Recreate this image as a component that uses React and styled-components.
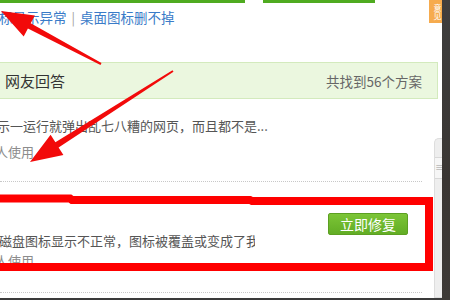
import React from 'react';
import styled, { createGlobalStyle } from 'styled-components';

const GlobalStyle = createGlobalStyle`
    html, body {
        margin: 0;
        padding: 0;
        background: #ffffff;
    }
    body {
        font-family: 'Noto Sans CJK SC', 'Noto Sans', 'Liberation Sans', sans-serif;
    }
`;

const Page = styled.div`
    display: flex;
    width: 450px;
    height: 300px;
    overflow: hidden;
    background: #3b3b3b;
`;

const Main = styled.div`
    position: relative;
    width: 442px;
    height: 298px;
    background: #ffffff;
    overflow: hidden;
`;

const DarkStrip = styled.div`
    flex: 1;
    background: linear-gradient(180deg, #3e3e3e 0%, #3a3633 60%, #3d3a37 100%);
`;

const TopBars = styled.div`
    display: flex;
    gap: 18px;
`;

const GreenBar = styled.div`
    width: ${(p) => p.$w}px;
    height: 3px;
    background: #4fab20;
`;

const LinkRow = styled.div`
    display: flex;
    align-items: center;
    margin: 4px 0 0 -1px;
    height: 20px;
    font-size: 13.5px;
    white-space: nowrap;
`;

const TextLink = styled.a`
    color: #3a7bc8;
    text-decoration: none;
`;

const Sep = styled.span`
    margin: 0 5px;
    color: #a0a0a0;
    font-size: 13px;
`;

const AnswerHead = styled.div`
    display: flex;
    align-items: center;
    justify-content: space-between;
    box-sizing: border-box;
    height: 37px;
    margin: 35px 4px 0 -1px;
    padding: 0 15px 0 5px;
    background: #ebf7df;
    border: 1px solid #d3eabd;
`;

const HeadTitle = styled.span`
    font-size: 15px;
    color: #333333;
`;

const HeadCount = styled.span`
    font-size: 13.5px;
    color: #666666;
`;

const Item = styled.div`
    display: flex;
    align-items: flex-start;
    justify-content: space-between;
    margin-right: 20px;
    padding: ${(p) => p.$pt}px 14px ${(p) => p.$pb}px 0;
    border-bottom: 1px dotted #c8c8c8;
`;

const ItemBody = styled.div`
    display: flex;
    flex-direction: column;
    margin-left: ${(p) => p.$ml}px;
    padding-top: ${(p) => p.$pt || 0}px;
    line-height: ${(p) => p.$lh}px;
    font-size: 13px;
`;

const Desc = styled.div`
    color: #555555;
    white-space: nowrap;
    overflow: hidden;
    width: ${(p) => (p.$w ? `${p.$w}px` : 'auto')};
`;

const Meta = styled.div`
    color: #8c8c8c;
    margin-left: ${(p) => p.$ml || 0}px;
`;

const FixButton = styled.button`
    width: 80px;
    height: 22px;
    padding: 0;
    border: 1px solid #5c9f22;
    border-radius: 2px;
    background: linear-gradient(180deg, #7cc536 0%, #62ad25 100%);
    color: #ffffff;
    font-family: inherit;
    font-size: 14px;
    line-height: 20px;
    cursor: pointer;
`;

const FeedbackTab = styled.div`
    position: absolute;
    top: 0;
    right: 0;
    width: 13px;
    height: 23px;
    background: #f6ab4e;
    color: #ffffff;
    font-size: 8px;
    line-height: 10px;
    text-align: center;
    writing-mode: vertical-rl;
    overflow: hidden;
`;

const SideDock = styled.div`
    position: absolute;
    top: 138px;
    right: 0;
    bottom: 0;
    width: 7px;
    background: #eeeeee;
    border: 1px solid #dddddd;
    border-right: none;
    border-radius: 5px 0 0 0;
`;

const DockHandle = styled.div`
    margin-top: 18px;
    height: 20px;
    background: #f6f6f6;
    border-top: 1px solid #d8d8d8;
    border-bottom: 1px solid #d8d8d8;
    color: #999999;
    font-size: 9px;
    line-height: 20px;
    text-align: center;
    overflow: hidden;
`;

const Overlay = styled.svg`
    position: absolute;
    left: 0;
    top: 0;
    pointer-events: none;
`;

// tapered arrow: thin tail at (x1,y1), head at (x2,y2)
function arrowPoints(x1, y1, x2, y2, headLen, headHalf, tail, neck) {
    const dx = x2 - x1;
    const dy = y2 - y1;
    const len = Math.hypot(dx, dy);
    const ux = dx / len;
    const uy = dy / len;
    const px = -uy;
    const py = ux;
    const bx = x2 - ux * headLen;
    const by = y2 - uy * headLen;
    const pts = [
        [x1 + px * tail, y1 + py * tail],
        [bx + px * neck, by + py * neck],
        [bx + px * headHalf, by + py * headHalf],
        [x2, y2],
        [bx - px * headHalf, by - py * headHalf],
        [bx - px * neck, by - py * neck],
        [x1 - px * tail, y1 - py * tail],
    ];
    return pts.map((p) => p.map((v) => v.toFixed(1)).join(',')).join(' ');
}

const Annotations = () => (
    <Overlay width="442" height="298" viewBox="0 0 442 298">
        <polygon points={arrowPoints(101, 64, 1, 11, 32, 12, 1, 3)} fill="#f20a0a" />
        <polygon points={arrowPoints(173, 71, 30, 162, 32, 12, 1, 3)} fill="#f20a0a" />
        <polyline
            points="-10,198.5 70,198.5 72,200 250,200 252,201 429,201 429,267 -10,267"
            fill="none"
            stroke="#ff0000"
            strokeWidth="8"
            strokeLinejoin="miter"
        />
    </Overlay>
);

const App = () => {
    return (
        <Page>
            <GlobalStyle />
            <Main>
                <TopBars>
                    <GreenBar $w={245} />
                    <GreenBar $w={112} />
                </TopBars>
                <LinkRow>
                    <TextLink href="#">标显示异常</TextLink>
                    <Sep>|</Sep>
                    <TextLink href="#">桌面图标删不掉</TextLink>
                </LinkRow>
                <AnswerHead>
                    <HeadTitle>网友回答</HeadTitle>
                    <HeadCount>共找到56个方案</HeadCount>
                </AnswerHead>
                <Item $pt={14} $pb={16}>
                    <ItemBody $ml={-3} $lh={26}>
                        <Desc>示一运行就弹出乱七八糟的网页，而且都不是...</Desc>
                        <Meta $ml={-2}>人使用</Meta>
                    </ItemBody>
                </Item>
                <Item $pt={31} $pb={21}>
                    <ItemBody $ml={-1} $pt={18} $lh={20}>
                        <Desc $w={256}>磁盘图标显示不正常，图标被覆盖或变成了我的电脑图标</Desc>
                        <Meta $ml={-4}>人使用</Meta>
                    </ItemBody>
                    <FixButton>立即修复</FixButton>
                </Item>
                <FeedbackTab>意见</FeedbackTab>
                <SideDock>
                    <DockHandle>≡</DockHandle>
                </SideDock>
                <Annotations />
            </Main>
            <DarkStrip />
        </Page>
    );
};

export default App;
